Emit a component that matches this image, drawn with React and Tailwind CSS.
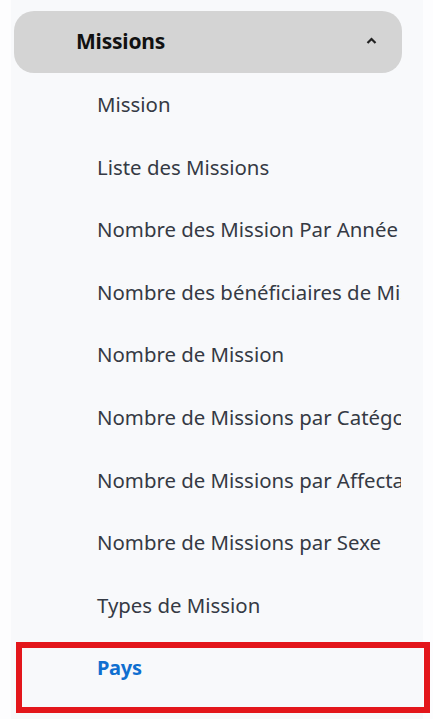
const ITEMS = [
  'Mission',
  'Liste des Missions',
  'Nombre des Mission Par Année',
  'Nombre des bénéficiaires de Missions',
  'Nombre de Mission',
  'Nombre de Missions par Catégorie',
  'Nombre de Missions par Affectation',
  'Nombre de Missions par Sexe',
  'Types de Mission',
]

export default function App() {
  return (
    <div
      className="relative h-[719px] w-[433px] overflow-hidden bg-[#fdfdfe]"
      style={{ fontFamily: '"Noto Sans", "Open Sans", sans-serif' }}
    >
      <div className="ml-[11px] h-full w-[412px] bg-[#f8f9fb] pt-[11px]">
        <div className="ml-[3px] flex h-[62px] w-[388px] items-center justify-between rounded-[20px] bg-[#d4d4d4] pl-[62px] pr-[25px]">
          <span className="text-[21px] font-bold tracking-[-0.2px] text-[#111]">Missions</span>
          <svg width="11" height="8" viewBox="0 0 11 8" className="mb-[2px]">
            <polyline points="1.5,6 5.5,2 9.5,6" fill="none" stroke="#222" strokeWidth="2.2" />
          </svg>
        </div>
        <ul className="w-[390px] overflow-hidden">
          {ITEMS.map((label) => (
            <li
              key={label}
              className="flex h-[62.6px] items-center overflow-hidden whitespace-nowrap pl-[86px] text-[20.4px] text-[#353a44]"
            >
              {label}
            </li>
          ))}
          <li className="flex h-[62.6px] items-center pl-[86px] text-[20px] font-bold tracking-[-0.3px] text-[#0f6fd0]">
            Pays
          </li>
        </ul>
      </div>
      <div className="absolute left-[16px] top-[642px] h-[71px] w-[414px] border-[6px] border-[#e3161b]" />
    </div>
  )
}
